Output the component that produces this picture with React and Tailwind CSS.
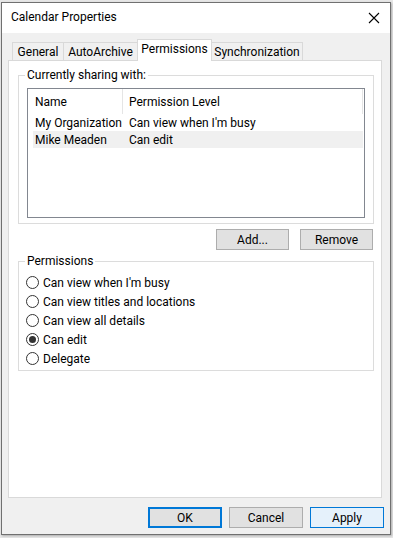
import React, { useState } from "react";

const tabs = [
  { label: "General", width: "w-[52px]" },
  { label: "AutoArchive", width: "w-[75px]" },
  { label: "Permissions", width: "w-[75px]", active: true },
  { label: "Synchronization", width: "w-[92px]" },
];

const sharing = [
  { name: "My Organization", level: "Can view when I'm busy" },
  { name: "Mike Meaden", level: "Can edit" },
];

const levels = [
  "Can view when I'm busy",
  "Can view titles and locations",
  "Can view all details",
  "Can edit",
  "Delegate",
];

const Radio = ({ label, checked, onSelect }) => (
  <div className="flex h-[19px] items-center gap-[4px]" onClick={onSelect}>
    <div className="flex h-[13px] w-[13px] items-center justify-center rounded-full border border-[#333333] bg-white">
      {checked && <div className="h-[7px] w-[7px] rounded-full bg-[#333333]" />}
    </div>
    <span>{label}</span>
  </div>
);

const App = () => {
  const [selected, setSelected] = useState(1);
  const [level, setLevel] = useState("Can edit");

  return (
    <div className="h-[538px] w-[393px] bg-[#e6e6e6] pl-[1px] pt-[2px] font-['Roboto',sans-serif] text-[12px] leading-[16px] text-black">
      <div className="flex h-[533px] w-[390px] flex-col border border-[#707070] bg-[#f0f0f0] shadow-[1px_1px_2px_rgba(0,0,0,0.25)]">
        {/* title bar */}
        <div className="flex h-[30px] items-center justify-between bg-white pl-[9px] pr-[9px]">
          <span className="pb-[2px]">Calendar Properties</span>
          <svg width="12" height="12" viewBox="0 0 12 12" className="mr-[1px]">
            <path d="M1 1 L11 11 M11 1 L1 11" stroke="#000" strokeWidth="1.1" fill="none" />
          </svg>
        </div>

        {/* tabs */}
        <div className="flex h-[27px] items-end pl-[8px]">
          {tabs.map((t, i) =>
            t.active ? (
              <div
                key={t.label}
                className={`relative z-10 -mb-px flex h-[22px] items-center justify-center border border-b-0 border-[#d9d9d9] bg-white pb-[3px] ${t.width} ${i > 0 ? "-ml-px" : "ml-[2px]"}`}
              >
                {t.label}
              </div>
            ) : (
              <div
                key={t.label}
                className={`flex h-[18px] items-center justify-center border border-b-0 border-[#d9d9d9] bg-[#f0f0f0] ${t.width} ${i > 0 ? "-ml-px" : "ml-[2px]"}`}
              >
                {t.label}
              </div>
            )
          )}
        </div>

        {/* tab panel */}
        <div className="ml-[6px] flex h-[438px] w-[374px] flex-col border border-[#d9d9d9] bg-white">
          <fieldset className="ml-[9px] mr-[7px] mt-[6px] border border-[#dcdcdc] pb-[5px]">
            <legend className="ml-[6px] px-[2px] leading-[16px]">Currently sharing with:</legend>
            <div className="mx-[8px] mt-[5px] h-[130px] border border-[#828790] bg-white">
              <div className="flex h-[25px] items-center">
                <div className="w-[94px] pl-[7px]">Name</div>
                <div className="w-px self-stretch bg-[#e5e5e5]" />
                <div className="flex-1 pl-[6px]">Permission Level</div>
                <div className="w-px self-stretch bg-[#e5e5e5]" />
                <div className="w-px" />
              </div>
              {sharing.map((row, i) => (
                <div
                  key={row.name}
                  onClick={() => setSelected(i)}
                  className={`ml-[5px] mr-[1px] flex h-[17px] items-center ${selected === i ? "bg-[#f0f0f0]" : ""}`}
                >
                  <div className="w-[96px] pl-[2px]">{row.name}</div>
                  <div>{row.level}</div>
                </div>
              ))}
            </div>
          </fieldset>

          <div className="mr-[8px] mt-[5px] flex justify-end gap-[11px]">
            <button className="h-[21px] w-[73px] border border-[#adadad] bg-[#e1e1e1]">Add...</button>
            <button className="h-[21px] w-[73px] border border-[#adadad] bg-[#e1e1e1]">Remove</button>
          </div>

          <fieldset className="ml-[9px] mr-[7px] mt-[3px] border border-[#dcdcdc] pb-[2px]">
            <legend className="ml-[6px] px-[2px] leading-[16px]">Permissions</legend>
            <div className="pl-[7px] pt-[4px]">
              {levels.map((l) => (
                <Radio key={l} label={l} checked={level === l} onSelect={() => setLevel(l)} />
              ))}
            </div>
          </fieldset>
        </div>

        {/* dialog buttons */}
        <div className="mr-[6px] mt-[9px] flex justify-end gap-[7px]">
          <button className="h-[21px] w-[74px] border-2 border-[#0078d7] bg-[#e1e1e1]">OK</button>
          <button className="h-[21px] w-[74px] border border-[#adadad] bg-[#e1e1e1]">Cancel</button>
          <button className="h-[21px] w-[74px] border border-[#0078d7] bg-[#e5f1fb]">Apply</button>
        </div>
      </div>
    </div>
  );
};

export default App;
